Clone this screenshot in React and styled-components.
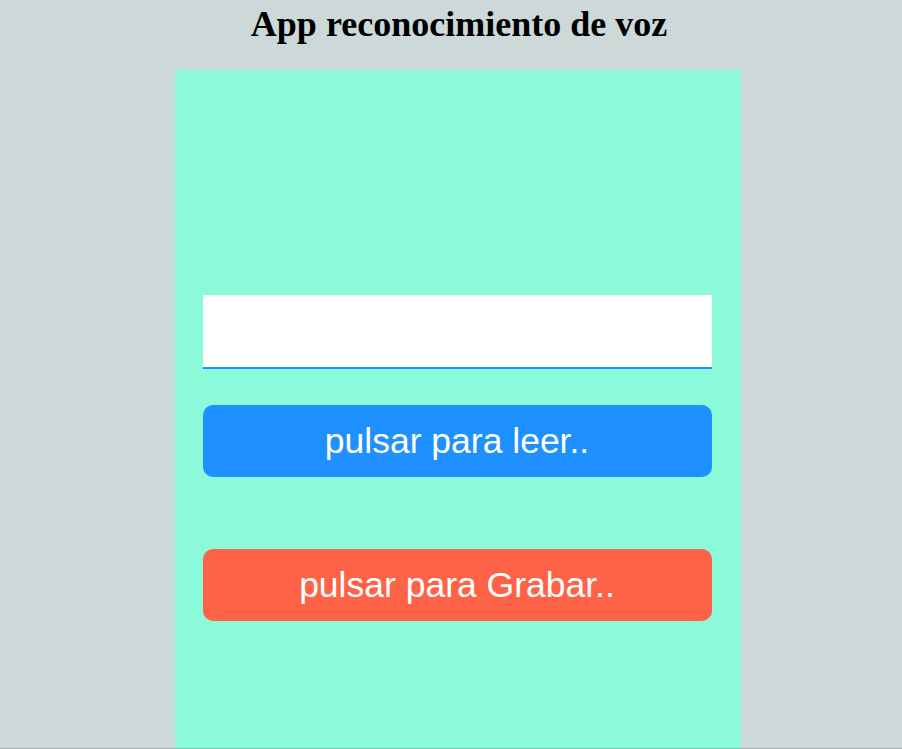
import React from "react";
import styled, { createGlobalStyle } from "styled-components";

const Global = createGlobalStyle`
  html, body { margin: 0; padding: 0; overflow: hidden; }
  body { background: #cdd8d8; font-family: "Liberation Serif", "Times New Roman", serif; }
`;

const Page = styled.div`
  display: flex;
  flex-direction: column;
  align-items: center;
  padding-left: 13px;
  height: 749px;
`;

const Title = styled.h1`
  margin: 4px 0 26px 3px;
  font-size: 36px;
  font-weight: bold;
  line-height: 40px;
  color: #000;
`;

const Panel = styled.div`
  width: 566px;
  height: 700px;
  box-sizing: border-box;
  background: #8bfad8;
  padding: 225px 29px 0 28px;
  display: flex;
  flex-direction: column;
`;

const TextInput = styled.input`
  height: 74px;
  box-sizing: border-box;
  border: none;
  border-bottom: 2px solid #1e90ff;
  background: #fff;
  outline: none;
  font-size: 24px;
  padding: 0 12px;
  margin-bottom: ${(p) => p.$gap}px;
`;

const Button = styled.button`
  height: 72px;
  border: none;
  border-radius: 10px;
  background: ${(p) => p.$bg};
  color: #fff;
  font-family: "Liberation Sans", Arial, sans-serif;
  font-size: 35.5px;
  cursor: pointer;
  margin-bottom: ${(p) => p.$gap}px;
`;

const BottomEdge = styled.div`
  position: fixed;
  left: 0;
  right: 0;
  bottom: 0;
  height: 1px;
  background: rgba(0, 0, 0, 0.2);
`;

export default function App() {
  return (
    <>
      <Global />
      <Page>
        <Title>App reconocimiento de voz</Title>
        <Panel>
          <TextInput type="text" $gap={36} />
          <Button $bg="#1e90ff" $gap={72}>pulsar para leer..</Button>
          <Button $bg="#ff6347" $gap={0}>pulsar para Grabar..</Button>
        </Panel>
      </Page>
      <BottomEdge />
    </>
  );
}
